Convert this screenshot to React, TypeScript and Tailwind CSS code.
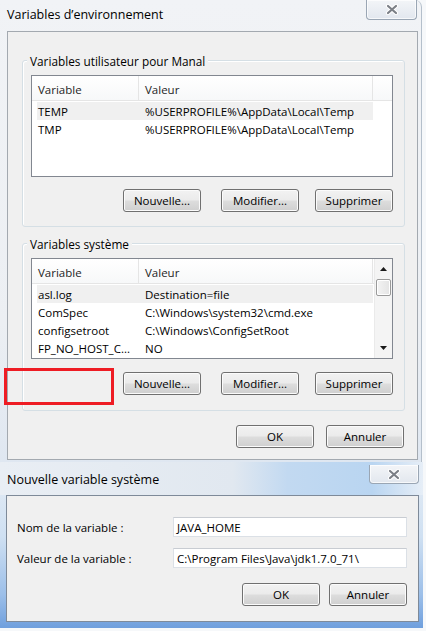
import React from "react";

const Btn = ({ children, className = "" }: { children: React.ReactNode; className?: string }) => (
  <div
    className={`h-[23px] w-[78px] flex items-center justify-center pt-[1px] rounded-[3px] border border-[#707070] bg-[linear-gradient(#f2f2f2_0%,#ebebeb_48%,#dddddd_52%,#cfcfcf_100%)] shadow-[inset_0_0_0_1px_#fbfbfb] text-[11.5px] text-black ${className}`}
  >
    {children}
  </div>
);

const CloseX = () => (
  <svg width="14" height="11" viewBox="0 0 14 11">
    <path d="M3 2 L11 9 M11 2 L3 9" stroke="#ffffff" strokeWidth="4.2" strokeLinecap="round" />
    <path d="M3 2 L11 9 M11 2 L3 9" stroke="#7b7f86" strokeWidth="2.2" strokeLinecap="round" />
  </svg>
);

const CloseBtn = ({ className = "" }: { className?: string }) => (
  <div
    className={`absolute flex items-center justify-center rounded-b-[4px] border border-t-0 border-[#9aa6b4] bg-[linear-gradient(#f3f5f8,#e2e7ee)] shadow-[inset_0_0_0_1px_rgba(255,255,255,0.7)] ${className}`}
  >
    <CloseX />
  </div>
);

const Group = ({ label, children, className = "" }: { label: string; children: React.ReactNode; className?: string }) => (
  <div className={`relative rounded-[3px] border border-[#d5dfe5] shadow-[inset_1px_1px_0_#ffffff] ${className}`}>
    <span className="absolute -top-[8px] left-[4px] bg-[#f0f0f0] px-[3px] text-[11.8px] leading-[16px] text-black">
      {label}
    </span>
    {children}
  </div>
);

type Row = [string, string];

const ListView = ({ rows, height, scroll }: { rows: Row[]; height: string; scroll?: boolean }) => (
  <div className={`ml-[8px] w-[362px] ${height} border border-[#828790] bg-white flex overflow-hidden`}>
    <div className="flex-1 flex flex-col">
      <div className="h-[25px] shrink-0 flex border-b border-[#e5e5e5] bg-[linear-gradient(#ffffff,#f7f8f9)] text-[11.5px] text-[#1e1e1e]">
        <div className="w-[107px] pl-[6px] pt-[3px] flex items-center border-r border-[#e5e5e5]">Variable</div>
        <div className="w-[234px] pl-[6px] pt-[3px] flex items-center border-r border-[#e5e5e5]">Valeur</div>
        <div className="flex-1" />
      </div>
      <div className="pt-[1px] flex flex-col">
        {rows.map(([a, b], i) => (
          <div
            key={a}
            className={`ml-[5px] w-[336px] h-[18px] pt-[2px] flex items-center text-[11.5px] text-black ${i === 0 ? "bg-[#f0f0f0]" : ""}`}
          >
            <div className="w-[108px] pl-[1px] whitespace-nowrap overflow-hidden">{a}</div>
            <div className="whitespace-nowrap">{b}</div>
          </div>
        ))}
      </div>
    </div>
    {scroll && (
      <div className="w-[18px] shrink-0 flex flex-col items-center bg-[#f4f4f4] border-l border-[#eaeaea]">
        <div className="h-[20px] flex items-center justify-center">
          <svg width="7" height="4" viewBox="0 0 7 4">
            <path d="M0 4 L3.5 0 L7 4 Z" fill="#1a1a1a" />
          </svg>
        </div>
        <div className="w-[15px] h-[17px] rounded-[2px] border border-[#9a9a9a] bg-[linear-gradient(90deg,#f3f3f3,#e4e4e4)] shadow-[inset_0_0_0_1px_#ffffff]" />
        <div className="flex-1" />
        <div className="h-[20px] flex items-center justify-center">
          <svg width="7" height="4" viewBox="0 0 7 4">
            <path d="M0 0 L7 0 L3.5 4 Z" fill="#1a1a1a" />
          </svg>
        </div>
      </div>
    )}
  </div>
);

const ButtonsRow = ({ className = "" }: { className?: string }) => (
  <div className={`flex justify-end pr-[11px] ${className}`}>
    <Btn className="mr-[20px]">Nouvelle...</Btn>
    <Btn className="mr-[16px]">Modifier...</Btn>
    <Btn>Supprimer</Btn>
  </div>
);

export default function App() {
  return (
    <div className="relative w-[426px] h-[631px] overflow-hidden bg-[#f6f8fa] font-['Open_Sans',sans-serif] text-black">
      {/* Window 1 */}
      <div className="relative w-[422px] h-[462px] rounded-tr-[7px] border-r border-[#b4bfcb] bg-[linear-gradient(180deg,#f1f3f6_0%,#eceff3_70%,#dfe7f1_100%)]">
        <div className="h-[31px] pl-[7px] pt-[6px] text-[12.5px] leading-[18px] text-black">Variables d’environnement</div>
        <CloseBtn className="top-0 right-[4px] w-[51px] h-[20px]" />
        <div className="ml-[7px] w-[411px] h-[429px] border border-[#a3a9b0] bg-[#f0f0f0] pt-[28px] pl-[14px]">
          <Group label="Variables utilisateur pour Manal" className="w-[383px] h-[167px] pt-[14px]">
            <ListView
              height="h-[102px]"
              rows={[
                ["TEMP", "%USERPROFILE%\\AppData\\Local\\Temp"],
                ["TMP", "%USERPROFILE%\\AppData\\Local\\Temp"],
              ]}
            />
            <ButtonsRow className="mt-[12px]" />
          </Group>
          <Group label="Variables système" className="mt-[16px] w-[383px] h-[168px] pt-[14px]">
            <ListView
              height="h-[101px]"
              scroll
              rows={[
                ["asl.log", "Destination=file"],
                ["ComSpec", "C:\\Windows\\system32\\cmd.exe"],
                ["configsetroot", "C:\\Windows\\ConfigSetRoot"],
                ["FP_NO_HOST_C...", "NO"],
              ]}
            />
            <ButtonsRow className="mt-[13px]" />
          </Group>
          <div className="mt-[14px] flex justify-end pr-[13px]">
            <Btn className="mr-[12px]">OK</Btn>
            <Btn>Annuler</Btn>
          </div>
        </div>
      </div>

      {/* Window 2 */}
      <div className="relative w-[423px] h-[166px] rounded-tr-[6px] bg-[linear-gradient(180deg,#e6edf5_0%,#cfe0f2_45%,#9cbfe9_80%,#6f9fdd_100%)]">
        <div className="h-[33px] pl-[7px] pt-[9px] text-[12.5px] leading-[18px] text-black bg-[linear-gradient(90deg,#e9eef4_0%,#e1e8f0_55%,#c2d9f1_68%,#b9d5f1_88%,#e6eef7_100%)]">
          Nouvelle variable système
        </div>
        <CloseBtn className="top-[3px] right-[4px] w-[50px] h-[19px]" />
        <div className="ml-[6px] w-[413px] h-[127px] border border-[#7e8a99] bg-[#f0f0f0] pt-[21px] pl-[10px] text-[11.5px]">
          <div className="flex items-center">
            <div className="w-[156px] pt-[1px]">Nom de la variable :</div>
            <div className="w-[234px] h-[20px] flex items-center pl-[3px] pt-[1px] bg-white border border-[#dbe0e6] border-t-[#c8ccd2]">JAVA_HOME</div>
          </div>
          <div className="mt-[11px] flex items-center">
            <div className="w-[156px] pt-[1px]">Valeur de la variable :</div>
            <div className="w-[234px] h-[20px] flex items-center pl-[3px] pt-[1px] bg-white border border-[#dbe0e6] border-t-[#c8ccd2]">C:\Program Files\Java\jdk1.7.0_71\</div>
          </div>
          <div className="mt-[15px] flex justify-end pr-[11px]">
            <Btn className="mr-[9px]">OK</Btn>
            <Btn>Annuler</Btn>
          </div>
        </div>
      </div>

      {/* red highlight annotation */}
      <div className="absolute left-[4px] top-[368px] w-[110px] h-[37px] border-[3px] border-[#ee1c24]" />
    </div>
  );
}
